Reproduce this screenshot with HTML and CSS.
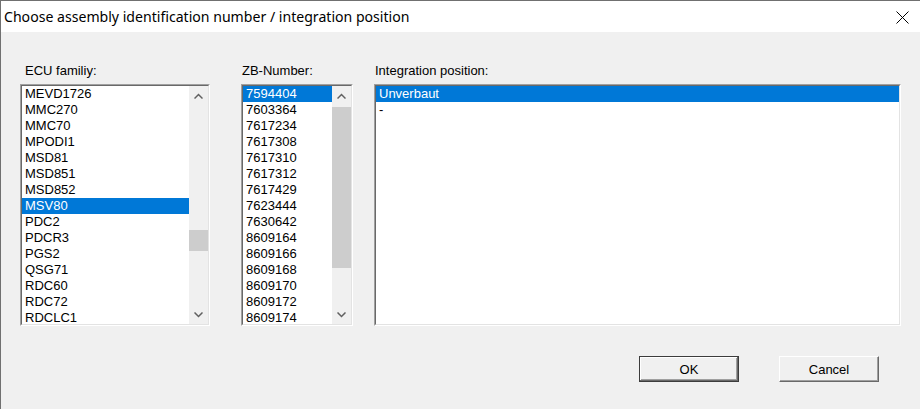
FILE: index.html
```html
<!DOCTYPE html>
<html>
<head>
<meta charset="utf-8">
<link rel="stylesheet" href="styles.css">
</head>
<body>
<div class="window">
  <div class="titlebar">
    <span class="title">Choose assembly identification number / integration position</span>
    <svg class="close" width="13" height="13" viewBox="0 0 13 13"><path d="M0.5 0.5 L12.5 12.5 M12.5 0.5 L0.5 12.5" stroke="#000" stroke-width="1" fill="none"/></svg>
  </div>
  <div class="body">
    <div class="lists">
      <div class="col col-ecu">
        <div class="label">ECU familiy:</div>
        <div class="listbox">
          <ul class="items">
            <li>MEVD1726</li><li>MMC270</li><li>MMC70</li><li>MPODI1</li><li>MSD81</li><li>MSD851</li><li>MSD852</li>
            <li class="sel">MSV80</li><li>PDC2</li><li>PDCR3</li><li>PGS2</li><li>QSG71</li><li>RDC60</li><li>RDC72</li><li>RDCLC1</li>
          </ul>
          <div class="scrollbar">
            <div class="arrow"><svg width="9" height="6" viewBox="0 0 9 6"><path d="M0.5 5.5 L4.5 1.5 L8.5 5.5" stroke="#606060" stroke-width="1.5" fill="none"/></svg></div>
            <div class="track"><div class="thumb thumb-ecu"></div></div>
            <div class="arrow"><svg width="9" height="6" viewBox="0 0 9 6"><path d="M0.5 0.5 L4.5 4.5 L8.5 0.5" stroke="#606060" stroke-width="1.5" fill="none"/></svg></div>
          </div>
        </div>
      </div>
      <div class="col col-zb">
        <div class="label">ZB-Number:</div>
        <div class="listbox">
          <ul class="items">
            <li class="sel">7594404</li><li>7603364</li><li>7617234</li><li>7617308</li><li>7617310</li><li>7617312</li><li>7617429</li>
            <li>7623444</li><li>7630642</li><li>8609164</li><li>8609166</li><li>8609168</li><li>8609170</li><li>8609172</li><li>8609174</li>
          </ul>
          <div class="scrollbar">
            <div class="arrow"><svg width="9" height="6" viewBox="0 0 9 6"><path d="M0.5 5.5 L4.5 1.5 L8.5 5.5" stroke="#606060" stroke-width="1.5" fill="none"/></svg></div>
            <div class="track"><div class="thumb thumb-zb"></div></div>
            <div class="arrow"><svg width="9" height="6" viewBox="0 0 9 6"><path d="M0.5 0.5 L4.5 4.5 L8.5 0.5" stroke="#606060" stroke-width="1.5" fill="none"/></svg></div>
          </div>
        </div>
      </div>
      <div class="col col-pos">
        <div class="label">Integration position:</div>
        <div class="listbox">
          <ul class="items">
            <li class="sel">Unverbaut</li><li>-</li>
          </ul>
        </div>
      </div>
    </div>
    <div class="buttons">
      <button class="btn btn-default">OK</button>
      <button class="btn">Cancel</button>
    </div>
  </div>
</div>
</body>
</html>
```
FILE: styles.css
```css
html, body {
  margin: 0;
  padding: 0;
  background: #f0f0f0;
}
.window {
  width: 920px;
  height: 409px;
  box-sizing: border-box;
  border-left: 1px solid #707070;
  border-top: 1px solid #707070;
  background: #f0f0f0;
  display: flex;
  flex-direction: column;
  overflow: hidden;
}
.titlebar {
  height: 31px;
  flex: none;
  background: #fff;
  display: flex;
  align-items: center;
  padding-left: 3px;
}
.title {
  font-family: "Noto Sans", sans-serif;
  font-size: 14.1px;
  color: #000;
  white-space: nowrap;
}
.close {
  margin-left: auto;
  margin-right: 11px;
  margin-top: 1px;
  display: block;
}
.body {
  flex: 1;
  padding: 31px 0 0 19px;
  font-family: "Liberation Sans", Arial, sans-serif;
  font-size: 13px;
  color: #000;
}
.lists {
  display: flex;
  align-items: flex-start;
}
.col-ecu { width: 190px; }
.col-zb { width: 112px; margin-left: 31px; }
.col-pos { width: 527px; margin-left: 21px; }
.label {
  height: 16px;
  line-height: 16px;
  margin-bottom: 5px;
  padding-left: 5px;
  white-space: nowrap;
}
.col-zb .label { padding-left: 1px; }
.col-pos .label { padding-left: 1px; }
.listbox {
  height: 242px;
  box-sizing: border-box;
  border: 1px solid;
  border-color: #a0a0a0 #ffffff #ffffff #a0a0a0;
  background: #fff;
  display: flex;
  overflow: hidden;
}
.items {
  list-style: none;
  margin: 0;
  padding: 0;
  flex: 1;
  min-width: 0;
  border-top: 1px solid #696969;
  border-left: 1px solid #696969;
  border-bottom: 1px solid #e3e3e3;
  overflow: hidden;
}
.col-pos .items {
  border-right: 1px solid #e3e3e3;
}
.items li {
  height: 16px;
  line-height: 16px;
  padding-left: 3px;
  white-space: nowrap;
}
.items li.sel {
  background: #0078d7;
  color: #fff;
}
.scrollbar {
  width: 19px;
  flex: none;
  background: #f0f0f0;
  border-top: 1px solid #696969;
  border-right: 1px solid #e3e3e3;
  border-bottom: 1px solid #e3e3e3;
  display: flex;
  flex-direction: column;
}
.arrow {
  height: 19px;
  flex: none;
  display: flex;
  align-items: center;
  justify-content: center;
}
.arrow svg { display: block; }
.track {
  flex: 1;
}
.thumb {
  background: #cdcdcd;
  width: 19px;
}
.thumb-ecu { margin-top: 125px; height: 21px; }
.thumb-zb { margin-top: 2px; height: 161px; }
.buttons {
  display: flex;
  justify-content: flex-end;
  gap: 40px;
  margin-top: 30px;
  padding-right: 41px;
}
.btn {
  width: 100px;
  height: 26px;
  box-sizing: border-box;
  margin: 0;
  padding: 0;
  font-family: "Liberation Sans", Arial, sans-serif;
  font-size: 13px;
  color: #000;
  background: #f0f0f0;
  border: 1px solid;
  border-color: #ffffff #696969 #696969 #ffffff;
  box-shadow: inset -1px -1px 0 #a0a0a0;
}
.btn-default {
  border-color: #3c3c3c;
  box-shadow: inset -1px -1px 0 #696969, inset 1px 1px 0 #ffffff, inset -2px -2px 0 #a0a0a0;
}
```
